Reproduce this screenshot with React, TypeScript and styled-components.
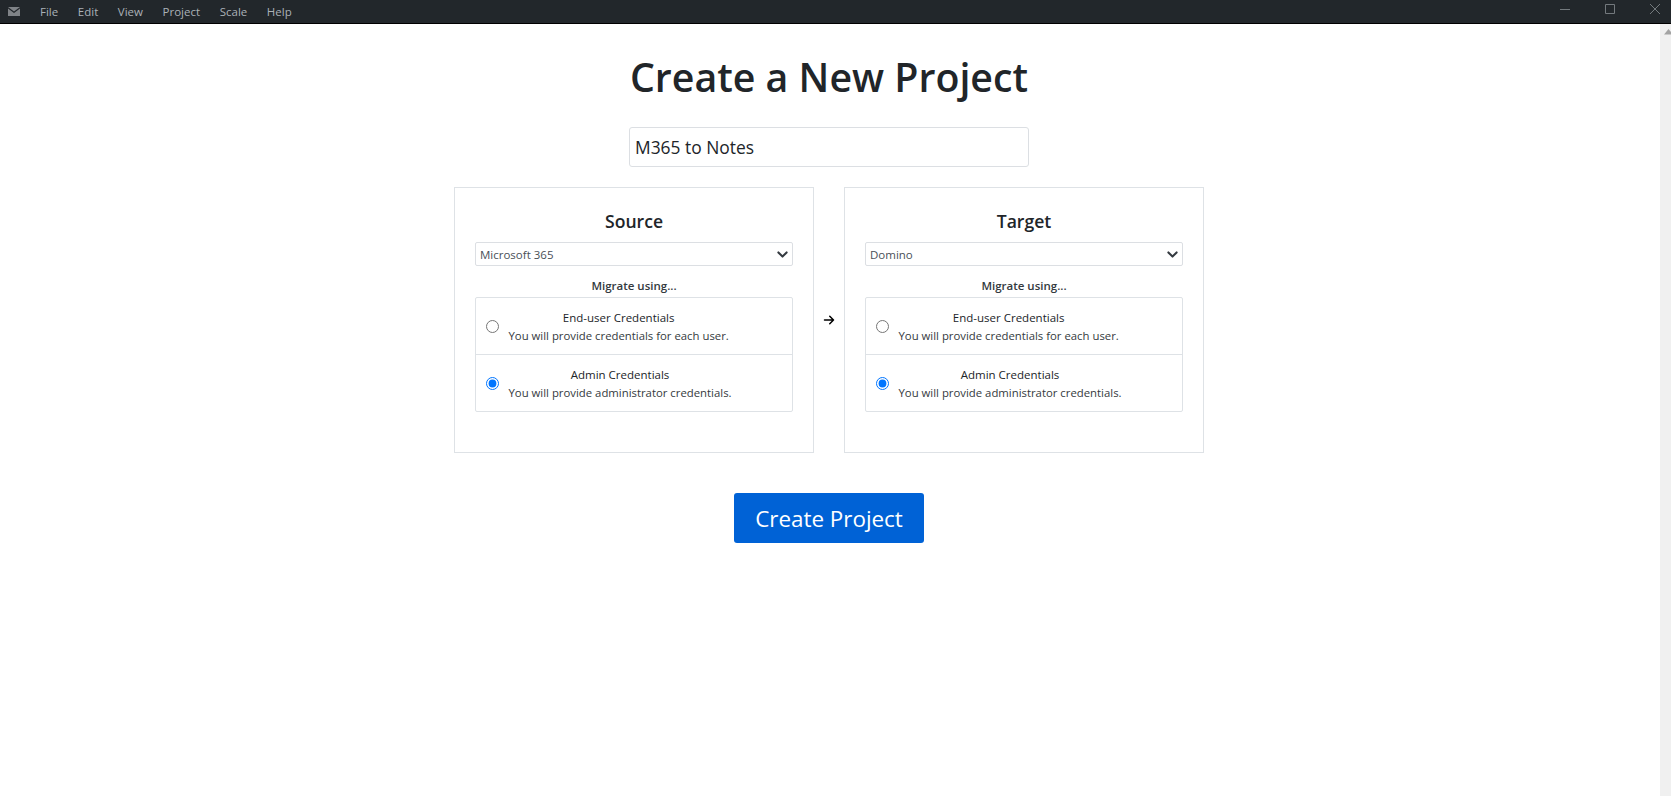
import React from "react";
import styled, { createGlobalStyle } from "styled-components";

const GlobalStyle = createGlobalStyle`
  html, body {
    margin: 0;
    padding: 0;
    height: 100%;
    overflow: hidden;
    background: #fff;
  }
  body {
    font-family: "Open Sans", "Noto Sans", sans-serif;
    color: #212529;
  }
  #root {
    height: 100%;
  }
`;

const Shell = styled.div`
  display: flex;
  flex-direction: column;
  height: 796px;
`;

const MenuBar = styled.div`
  display: flex;
  align-items: center;
  height: 23px;
  flex-shrink: 0;
  background: #22272b;
  border-bottom: 1px solid #000;
  color: #aab1b7;
  font-size: 11.5px;
`;

const AppIcon = styled.svg`
  width: 12px;
  height: 9px;
  margin: 0 20px 0 8px;
`;

const MenuItem = styled.span`
  margin-right: 19.6px;
`;

const WindowControls = styled.div`
  display: flex;
  align-items: center;
  gap: 13px;
  margin-left: auto;
`;

const WindowButton = styled.svg`
  width: 32px;
  height: 23px;
  color: #73797d;
`;

const Body = styled.div`
  flex: 1;
  display: flex;
  min-height: 0;
`;

const Page = styled.main`
  flex: 1;
  display: flex;
  flex-direction: column;
  align-items: center;
  padding: 29px 2px 0 0;
`;

const Title = styled.h1`
  margin: 0;
  font-size: 39.3px;
  line-height: 48px;
  font-weight: 600;
  color: #212529;
`;

const NameInput = styled.input`
  box-sizing: border-box;
  width: 400px;
  height: 40px;
  margin-top: 26px;
  padding: 0 5px;
  border: 1px solid #dcdfe3;
  border-radius: 3px;
  font: inherit;
  font-size: 17.4px;
  color: #212529;
  outline: none;
`;

const Columns = styled.div`
  display: flex;
  align-items: center;
  margin-top: 20px;
`;

const Card = styled.section`
  box-sizing: border-box;
  width: 360px;
  height: 266px;
  padding: 20px;
  border: 1px solid #dee2e6;
`;

const CardTitle = styled.h2`
  margin: 1px 0 0;
  font-size: 17.6px;
  line-height: 24px;
  font-weight: 600;
  text-align: center;
  color: #212529;
`;

const SelectBox = styled.div`
  box-sizing: border-box;
  display: flex;
  align-items: center;
  justify-content: space-between;
  height: 24px;
  margin-top: 9px;
  padding: 0 4px;
  border: 1px solid #dcdfe3;
  border-radius: 2px;
  font-size: 11.5px;
  color: #495057;
`;

const Chevron = styled.svg`
  width: 11px;
  height: 11px;
  color: #343a40;
`;

const MigrateLabel = styled.div`
  margin-top: 11px;
  font-size: 11.5px;
  line-height: 18px;
  font-weight: 600;
  text-align: center;
  color: #343a40;
`;

const OptionGroup = styled.div`
  margin-top: 2px;
  border: 1px solid #dee2e6;
  border-radius: 2px;
`;

const OptionRow = styled.label`
  box-sizing: border-box;
  display: flex;
  align-items: center;
  height: 56px;
  padding-left: 10px;

  & + & {
    height: 57px;
    border-top: 1px solid #dee2e6;
  }
`;

const Radio = styled.input`
  width: 13px;
  height: 13px;
  margin: 0 9.500px 0 0;
  flex-shrink: 0;
  accent-color: #0075ff;
`;

const OptionText = styled.div`
  display: flex;
  flex-direction: column;
  align-items: center;
  padding-top: 2px;
  font-size: 11.35px;
  line-height: 18px;
`;

const OptionName = styled.span`
  font-size: 11.5px;
  font-weight: 500;
  color: #212529;
`;

const OptionHint = styled.span`
  color: #343a40;
`;

const ArrowSlot = styled.div`
  display: flex;
  justify-content: center;
  width: 30px;
`;

const Arrow = styled.svg`
  width: 12px;
  height: 12px;
  color: #000;
`;

const SubmitButton = styled.button`
  box-sizing: border-box;
  width: 190px;
  height: 50px;
  margin-top: 40px;
  border: none;
  border-radius: 3px;
  background: #0062d6;
  color: #fff;
  font: inherit;
  font-size: 22.4px;
`;

const Scrollbar = styled.div`
  width: 11px;
  flex-shrink: 0;
  overflow: hidden;
  background: #f0f0f0;
`;

const ScrollArrow = styled.svg`
  display: block;
  width: 17px;
  height: 17px;
  color: #a3a3a3;
`;

const menus = ["File", "Edit", "View", "Project", "Scale", "Help"];

const options = [
  { name: "End-user Credentials", hint: "You will provide credentials for each user.", checked: false },
  { name: "Admin Credentials", hint: "You will provide administrator credentials.", checked: true },
];

const EndpointCard = ({ title, system }: { title: string; system: string }) => (
  <Card>
    <CardTitle>{title}</CardTitle>
    <SelectBox>
      <span>{system}</span>
      <Chevron viewBox="0 0 16 16" fill="none" stroke="currentColor" strokeWidth="3" strokeLinecap="round" strokeLinejoin="round">
        <path d="M2 5l6 6 6-6" />
      </Chevron>
    </SelectBox>
    <MigrateLabel>Migrate using...</MigrateLabel>
    <OptionGroup>
      {options.map((option) => (
        <OptionRow key={option.name}>
          <Radio type="radio" name={title} defaultChecked={option.checked} />
          <OptionText>
            <OptionName>{option.name}</OptionName>
            <OptionHint>{option.hint}</OptionHint>
          </OptionText>
        </OptionRow>
      ))}
    </OptionGroup>
  </Card>
);

export default function App() {
  return (
    <Shell>
      <GlobalStyle />
      <MenuBar>
        <AppIcon viewBox="0 0 12 9">
          <path d="M0 0h12L6 4.500z" fill="#7f8387" />
          <path d="M0 1.400v7.600h12V1.400L6 6z" fill="#7f8387" />
        </AppIcon>
        {menus.map((menu) => (
          <MenuItem key={menu}>{menu}</MenuItem>
        ))}
        <WindowControls>
          <WindowButton viewBox="0 0 32 23" fill="none" stroke="currentColor">
            <path d="M11 9.500h10" />
          </WindowButton>
          <WindowButton viewBox="0 0 32 23" fill="none" stroke="currentColor">
            <path d="M11.500 4.500h9v9h-9z" />
          </WindowButton>
          <WindowButton viewBox="0 0 32 23" fill="none" stroke="currentColor">
            <path d="M11 4l10 10M21 4L11 14" />
          </WindowButton>
        </WindowControls>
      </MenuBar>
      <Body>
        <Page>
          <Title>Create a New Project</Title>
          <NameInput defaultValue="M365 to Notes" />
          <Columns>
            <EndpointCard title="Source" system="Microsoft 365" />
            <ArrowSlot>
              <Arrow viewBox="0 0 16 16" fill="none" stroke="currentColor" strokeWidth="2" strokeLinecap="round" strokeLinejoin="round">
                <path d="M2 8h12M9 3l5 5-5 5" />
              </Arrow>
            </ArrowSlot>
            <EndpointCard title="Target" system="Domino" />
          </Columns>
          <SubmitButton>Create Project</SubmitButton>
        </Page>
        <Scrollbar>
          <ScrollArrow viewBox="0 0 17 17" fill="currentColor">
            <path d="M8.500 5L13 10.500H4z" />
          </ScrollArrow>
        </Scrollbar>
      </Body>
    </Shell>
  );
}
